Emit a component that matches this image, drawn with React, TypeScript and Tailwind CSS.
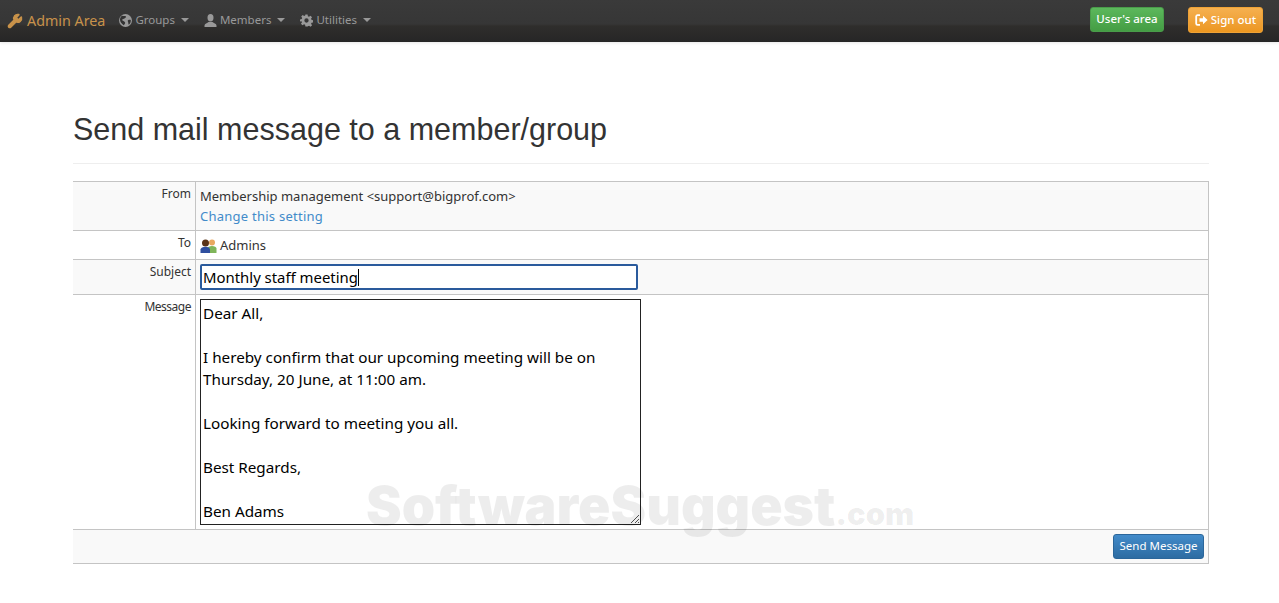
import React from 'react';
import { Wrench } from 'lucide-react';

const TAHOMA = "font-['Noto_Sans',sans-serif]";

const Caret = () => (
  <span className="ml-[2px] inline-block w-0 h-0 border-x-[4px] border-x-transparent border-t-[4px] border-t-[#999] align-middle" />
);

const GlobeIcon = () => (
  <svg width="13" height="13" viewBox="0 0 13 13">
    <circle cx="6.500" cy="6.500" r="6.500" fill="#999" />
    <path d="M3 1.800c1.500.4 3 0 4 .7.500 1-.8 1.300-1.500 2-.7.600-2 .3-2.300 1.300-.2.900 1.200 1.300 2 1.600.9.400 1.200 1.300.8 2.200-.3.800-.9 1.400-1.300 1.700C2.800 9.800 1 8 1 5.800 1 4.200 1.800 2.800 3 1.800z" fill="#333" />
    <path d="M9 6.200c.8-.5 2-.6 2.800-.3.200 1.800-.6 3.700-2 4.800-.6-.9-.4-2-.8-3-.2-.5-.4-1.100 0-1.500z" fill="#333" />
  </svg>
);

const UserIcon = () => (
  <svg width="13" height="13" viewBox="0 0 13 13" fill="#999">
    <ellipse cx="6.500" cy="3.800" rx="3" ry="3.700" />
    <path d="M0.500 13v-1.600c0-1.600 3-2.400 4-3.400h4c1 1 4 1.800 4 3.400V13z" />
  </svg>
);

const GearIcon = () => (
  <svg width="13" height="13" viewBox="0 0 24 24" fill="#999">
    <path d="M10 1h4l.6 3.200 2 .9L19.400 3.200l2.800 2.800-1.900 2.800.9 2 3.300.6v4l-3.200.6-.9 2 1.900 2.800-2.800 2.800-2.800-1.900-2 .9L14 23h-4l-.6-3.200-2-.9-2.800 1.900-2.800-2.800 1.900-2.800-.9-2L0 14v-4l3.200-.6.900-2L2.200 4.600 5 1.800l2.600 1.800 2-.9zM12 8a4 4 0 1 0 0 8 4 4 0 0 0 0-8z" />
  </svg>
);

const SignOutIcon = () => (
  <svg width="13" height="12" viewBox="0 0 13 12" fill="none">
    <path d="M5 1.200H2.500A1.300 1.300 0 0 0 1.200 2.500v7a1.300 1.300 0 0 0 1.300 1.300H5" stroke="#fff" strokeWidth="1.800" />
    <path d="M4.500 4.300h3.500V1.800L12.600 6 8 10.200V7.700H4.500z" fill="#fff" />
  </svg>
);

const PeopleIcon = () => (
  <svg width="17" height="14" viewBox="0 0 17 14">
    <circle cx="12" cy="3.500" r="3" fill="#e8a860" />
    <path d="M7.500 14V9.500c0-1.500 2-2.500 4.500-2.500s4.500 1 4.500 2.500V14z" fill="#7fb55a" />
    <circle cx="5.500" cy="4" r="3.500" fill="#5a3418" />
    <path d="M0.500 14v-3.500C.5 9 3 7.800 5.500 7.800s4.500 1.200 4.500 2.700V14z" fill="#2f4f9f" />
  </svg>
);

const NavItem = ({ icon, label }: { icon: React.ReactNode; label: string }) => (
  <div className="flex items-center gap-[3px] text-[11.500px] text-[#999]">
    {icon}
    <span className="mr-[1px]">{label}</span>
    <Caret />
  </div>
);

const Row = ({
  label,
  shaded,
  className,
  labelClassName,
  children,
}: {
  label: string;
  shaded?: boolean;
  className: string;
  labelClassName?: string;
  children: React.ReactNode;
}) => (
  <div className={`flex border-b border-[#c4c4c4] ${shaded ? 'bg-[#f9f9f9]' : 'bg-white'} ${className}`}>
    <div className={`w-[123px] shrink-0 border-r border-[#c4c4c4] pr-[4px] pt-[3px] text-right text-[12px] leading-[18px] text-[#333] ${labelClassName ?? ''}`}>
      {label}
    </div>
    <div className="flex-1 pl-[4px]">{children}</div>
  </div>
);

const message = `Dear All,

I hereby confirm that our upcoming meeting will be on
Thursday, 20 June, at 11:00 am.

Looking forward to meeting you all.

Best Regards,

Ben Adams`;

export default function App() {
  return (
    <div className={`relative h-[603px] bg-white overflow-hidden ${TAHOMA}`}>
      <nav className="flex h-[42px] items-start justify-between bg-[linear-gradient(to_bottom,#3a3a3a_0px,#363636_24px,#2f2e2c_26px,#262626_42px)] pl-[7px] pr-[16px] shadow-[0_1px_3px_rgba(0,0,0,0.1)]">
        <div className="flex items-center">
          <div className="flex h-[41px] items-center gap-[4px] text-[14.300px] text-[#c8924a]">
            <Wrench size={16} fill="#c8924a" strokeWidth={2} />
            <span>Admin Area</span>
          </div>
          <div className="ml-[14px] flex h-[38px] items-center gap-[15px] pb-[1px]">
            <NavItem icon={<GlobeIcon />} label="Groups" />
            <NavItem icon={<UserIcon />} label="Members" />
            <NavItem icon={<GearIcon />} label="Utilities" />
          </div>
        </div>
        <div className="flex items-start gap-[24px] pt-[7px]">
          <div className="flex h-[25px] w-[74px] items-center justify-center rounded-[3px] border border-[#4a9c4a] bg-gradient-to-b from-[#5cb85c] to-[#449d44] pb-[1px] text-[11.500px] font-medium text-white">
            User's area
          </div>
          <div className="flex h-[26px] w-[75px] items-center justify-center gap-[3px] rounded-[3px] border border-[#eea236] bg-gradient-to-b from-[#f5b04f] to-[#ec971f] pb-[1px] text-[11.500px] font-medium text-white">
            <SignOutIcon />
            Sign out
          </div>
        </div>
      </nav>

      <main className="mx-[73px] w-[1136px]">
        <h1 className="mt-[67px] h-[41px] font-['Liberation_Sans',sans-serif] text-[30.500px] leading-[40px] text-[#333]">
          Send mail message to a member/group
        </h1>
        <div className="mt-[13px] border-t border-[#eee]" />

        <div className="mt-[17px] border-t border-r border-[#c4c4c4]">
          <Row label="From" shaded className="h-[49px]">
            <div className="pt-[4px] text-[13px] leading-[20px] text-[#333]">
              Membership management &lt;support@bigprof.com&gt;
            </div>
            <div className="text-[13px] leading-[20px] tracking-[0.25px] text-[#428bca]">Change this setting</div>
          </Row>
          <Row label="To" className="h-[29px]">
            <div className="flex h-full items-center gap-[3px] pt-[1px] text-[13px] text-[#333]">
              <PeopleIcon />
              Admins
            </div>
          </Row>
          <Row label="Subject" shaded className="h-[35px]">
            <div className="pt-[4px]">
              <div className="relative flex h-[26px] w-[438px] items-center rounded-[2px] border-2 border-[#2a5a9c] bg-white pl-[1px] text-[14.900px] text-black">
                Monthly staff meeting
                <span className="h-[17px] w-px bg-black" />
              </div>
            </div>
          </Row>
          <Row label="Message" labelClassName="tracking-[-0.5px]" className="h-[235px]">
            <div className="pt-[4px]">
              <div className="relative h-[226px] w-[441px] border border-[#222] bg-white px-[2px] pt-[2px] text-[15.250px] leading-[22px] text-black whitespace-pre-wrap">
                {message}
                <svg className="absolute bottom-0 right-0" width="10" height="10" viewBox="0 0 10 10" stroke="#555">
                  <path d="M1 9 9 1M5 9 9 5M8 9l1-1" />
                </svg>
              </div>
            </div>
          </Row>
          <div className="flex h-[34px] items-start justify-end border-b border-[#c4c4c4] bg-[#f9f9f9] pr-[4px] pt-[4px]">
            <div className="flex h-[25px] w-[91px] items-center justify-center rounded-[3px] border border-[#2b669a] bg-gradient-to-b from-[#428bca] to-[#2d6ca2] pb-[1px] text-[11.500px] text-white">
              Send Message
            </div>
          </div>
        </div>
      </main>

      <div className="pointer-events-none absolute left-[366px] top-[474px] whitespace-nowrap font-['Inter',sans-serif] text-[53.500px] font-black leading-[64px] text-black/[0.07]">
        SoftwareSuggest<span className="text-[31px]">.com</span>
      </div>
    </div>
  );
}
